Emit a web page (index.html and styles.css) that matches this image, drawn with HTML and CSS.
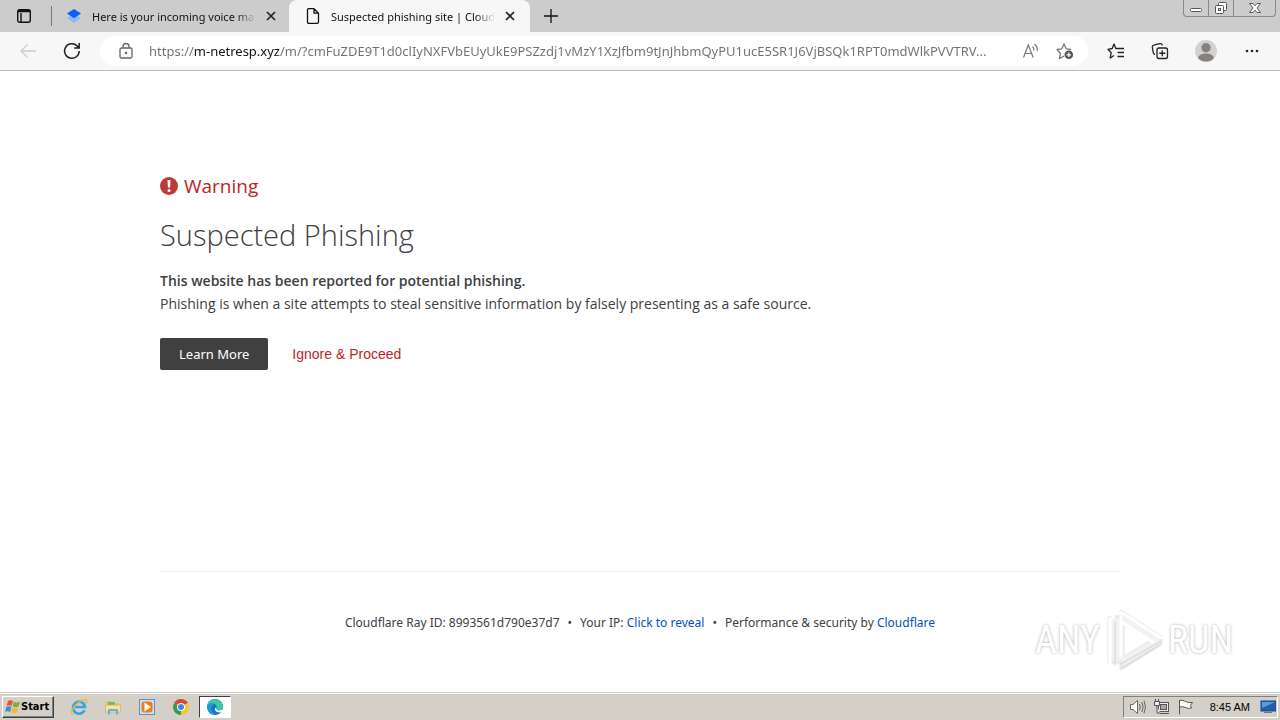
FILE: index.html
```html
<!DOCTYPE html>
<html lang="en">
<head>
    <meta charset="UTF-8">
    <meta name="viewport" content="width=device-width, initial-scale=1.0">
    <title>Suspected phishing site | Cloudflare</title>
    <link rel="stylesheet" href="styles.css">
</head>
<body>
    <header class="browser">
        <div class="tabstrip">
            <button class="tab-actions" aria-label="Tab actions">
                <svg width="16" height="16" viewBox="0 0 16 16" fill="none" stroke="#111" stroke-width="1.4"><rect x="1.7" y="1.7" width="12.6" height="12.6" rx="2"/><path d="M2 3.5h12M5 5v9" /><path d="M2 2.7h12" stroke-width="2"/></svg>
            </button>
            <div class="tab">
                <svg width="16" height="16" viewBox="0 0 16 16"><path d="M1 10l7-4 7 4-7 5z" fill="#8fb9f0"/><path d="M1 5.5L8 1l7 4.500-7 4.800z" fill="#0a62f5"/></svg>
                <span class="tab-title">Here is your incoming voice ma</span>
                <button class="close" aria-label="Close tab"><svg width="10" height="10" viewBox="0 0 10 10" stroke="#222" stroke-width="1.700"><path d="M1 1l8 8M9 1L1 9"/></svg></button>
            </div>
            <div class="tab active">
                <svg width="16" height="16" viewBox="0 0 16 16" fill="none" stroke="#111" stroke-width="1.3" stroke-linejoin="round"><path d="M2.500 2q0-1.300 1.300-1.300H9l4.500 4.500v8.800q0 1.300-1.300 1.300H3.800q-1.300 0-1.300-1.300zM9 .7v4.500h4.500"/></svg>
                <span class="tab-title">Suspected phishing site | Cloud</span>
                <button class="close" aria-label="Close tab"><svg width="10" height="10" viewBox="0 0 10 10" stroke="#222" stroke-width="1.700"><path d="M1 1l8 8M9 1L1 9"/></svg></button>
            </div>
            <button class="new-tab" aria-label="New tab"><svg width="14" height="14" viewBox="0 0 14 14" stroke="#111" stroke-width="1.300"><path d="M7 0v14M0 7h14"/></svg></button>
            <div class="window-controls">
                <button aria-label="Minimize"><svg width="14" height="12" viewBox="0 0 14 12" fill="#fff" stroke="#555"><rect x="1.500" y="6.500" width="11" height="3" rx="1"/></svg></button>
                <button aria-label="Restore"><svg width="14" height="14" viewBox="0 0 14 14" fill="#fff" stroke="#555"><rect x="4.500" y="1.500" width="8" height="8" rx="1"/><rect x="1.500" y="4.500" width="8" height="8" rx="1"/><rect x="4.500" y="7.500" width="2" height="2"/></svg></button>
                <button class="wide" aria-label="Close window"><svg width="14" height="12" viewBox="0 0 14 12" fill="#fff" stroke="#555"><path d="M1.500 1.500h3.500l2 2.300 2-2.300h3.500L9 6l3.500 4.500H9L7 8.200 5 10.500H1.500L5 6z"/></svg></button>
            </div>
        </div>
        <div class="toolbar">
            <button aria-label="Back"><svg width="18" height="16" viewBox="0 0 18 16" fill="none" stroke="#ccc" stroke-width="1.300"><path d="M17 8H2M8.500 1.500L2 8l6.500 6.500"/></svg></button>
            <button class="reload" aria-label="Refresh"><svg width="18" height="18" viewBox="0 0 18 18" fill="none" stroke="#222" stroke-width="1.500"><path d="M16.200 9A7.300 7.300 0 1 1 13.800 3.600L16 5.600M16.200 1v5h-5"/></svg></button>
            <div class="address">
                <svg width="14" height="18" viewBox="0 0 14 18" fill="none" stroke="#666" stroke-width="1.300"><rect x="1" y="6" width="12" height="10" rx="1.500"/><path d="M4 6V4.500a3 3 0 0 1 6 0V6"/><circle cx="7" cy="11" r=".6" fill="#666"/></svg>
                <input class="url" type="text" aria-label="Address" value="https://m-netresp.xyz/m/?cmFuZDE9T1d0clIyNXFVbEUyUkE9PSZzdj1vMzY1XzJfbm9tJnJhbmQyPU1ucE5SR1J6VjBSQk1RPT0mdWlkPVVTRV...">
                <button aria-label="Read aloud"><svg width="18" height="16" viewBox="0 0 18 16" fill="none" stroke="#777" stroke-width="1.200"><path d="M1.500 14.500L6.300 2l4.900 12.500M3 10.500h6.600M10.500 3.500q1.700 1.500 1.300 4M12.500 1q3.400 3 2.700 7"/></svg></button>
                <button aria-label="Add to favorites"><svg width="18" height="18" viewBox="0 0 18 18" fill="none" stroke="#777" stroke-width="1.300" stroke-linejoin="round"><path d="M8 14.200L3.500 16.500l.9-5.200L1 7.500l4.800-.7L8 2l2.200 4.800 4.800.7"/><circle cx="12.800" cy="12.800" r="4.300" fill="#555" stroke="none"/><path d="M12.800 10.500v4.600M10.500 12.800h4.600" stroke="#fff"/></svg></button>
            </div>
            <div class="tools">
                <button aria-label="Favorites"><svg width="18" height="18" viewBox="0 0 18 18" fill="none" stroke="#222" stroke-width="1.300" stroke-linejoin="round"><path d="M11 6.500H8.800L7 2 5.200 6.500 1 7.300l3.200 3.400-1 5.300L7 13.500M9.500 6.500H17M10.500 10.500H17M10.500 14.500H17"/></svg></button>
                <button aria-label="Collections"><svg width="18" height="18" viewBox="0 0 18 18" fill="none" stroke="#222" stroke-width="1.300" stroke-linejoin="round"><path d="M4 12.500q-1.500-.3-1.800-2L1.300 5.200q-.2-1.700 1.400-2l6.200-1.500q2-.4 2.500 1.600"/><rect x="6" y="6" width="10.500" height="10.500" rx="2"/><path d="M11.250 8.300v6M8.300 11.250h6"/></svg></button>
                <button aria-label="Profile"><svg width="22" height="22" viewBox="0 0 22 22"><circle cx="11" cy="11" r="11" fill="#d4d2d0"/><circle cx="11" cy="7.700" r="4.700" fill="#85817f"/><ellipse cx="11" cy="17.500" rx="7.700" ry="4" fill="#85817f"/></svg></button>
                <button aria-label="Settings and more"><svg width="18" height="4" viewBox="0 0 18 4" fill="#222"><circle cx="4" cy="2" r="1.300"/><circle cx="9" cy="2" r="1.300"/><circle cx="14" cy="2" r="1.300"/></svg></button>
            </div>
        </div>
    </header>

    <main class="page">
        <div class="content">
            <h2 class="warning">
                <svg width="18" height="18" viewBox="0 0 18 18"><circle cx="9" cy="9" r="9" fill="#bd3b36"/><path d="M7.500 3h3l-.5 7.500H8z" fill="#fff"/><circle cx="9" cy="13.500" r="1.500" fill="#fff"/></svg>
                Warning
            </h2>
            <h1>Suspected Phishing</h1>
            <p><strong>This website has been reported for potential phishing.</strong></p>
            <p>Phishing is when a site attempts to steal sensitive information by falsely presenting as a safe source.</p>
            <div class="actions">
                <a class="learn" href="#learn">Learn More</a>
                <button class="proceed">Ignore &amp; Proceed</button>
            </div>
        </div>
        <footer class="footer">
            <span>Cloudflare Ray ID: 8993561d790e37d7</span>
            <span class="sep">•</span>
            <span>Your IP: <button class="reveal">Click to reveal</button></span>
            <span class="sep">•</span>
            <span>Performance &amp; security by <a href="#cloudflare">Cloudflare</a></span>
        </footer>
        <div class="watermark">
            <span>ANY</span>
            <svg width="60" height="64" viewBox="0 0 60 64" fill="none" stroke-linejoin="round" stroke-linecap="round"><path d="M17 3l40 26v7L17 61V54L5 55V10L17 8z" fill="#f2f2f2" stroke="#e9e9e9" stroke-width="3"/><path d="M20 18v30l27-16z" fill="#fff" stroke="#e2e2e2" stroke-width="1"/><path d="M6 55V11l4-2M17 48V4l40 26M19 15l30 19" stroke="#fff" stroke-width="3"/><path d="M11 14v43M17 56l40-23M18 60l38-23" stroke="#dedede" stroke-width="1.500"/></svg>
            <span>RUN</span>
        </div>
    </main>

    <div class="taskbar">
        <button class="start">
            <svg width="16" height="16" viewBox="0 0 16 16"><path d="M3 2q3-1.500 5 .2L6.700 7Q4.500 5.500 1.700 6.700z" fill="#e8572c"/><path d="M9 2.700q2.500 1.500 6 0L13.700 7.500Q10.500 9 7.700 7.400z" fill="#72b043"/><path d="M1.400 7.800q3-1.300 5 .2L5.100 13Q3 11.500 0 12.700z" fill="#3d8dd4"/><path d="M7.400 8.500q3 1.600 6 .2L12 13.500q-3 1.500-6 0z" fill="#f4bd27"/></svg>
            Start
        </button>
        <nav class="quick">
            <button aria-label="Internet Explorer"><svg width="18" height="18" viewBox="0 0 18 18" fill="none"><path d="M14.500 12.200A6 6 0 1 1 15 9H5" stroke="#35a6de" stroke-width="2.600"/><path d="M2.500 16.500C-1.500 14 8 2 15.500 1.700q2.300.3.500 3.700" stroke="#e5b83b" stroke-width="1.300"/></svg></button>
            <button aria-label="File Explorer"><svg width="18" height="18" viewBox="0 0 18 18"><path d="M2 3h5l1 2h7v9H2z" fill="#e6c45c"/><path d="M4 4h7v5H4z" fill="#6db776"/><path d="M1.500 7h15v7h-15z" fill="#f7e29a" stroke="#d3ad4e" stroke-width=".7"/><path d="M4 16.500V12q0-1 1-1h8q1 0 1 1v4.500h-2V13H6v3.500z" fill="#62b4dc"/></svg></button>
            <button aria-label="Media Player"><svg width="18" height="18" viewBox="0 0 18 18"><rect x="1.500" y="1.500" width="15" height="15" fill="#c9e0f4" stroke="#5d92c4"/><rect x="3.500" y="3.500" width="11" height="11" rx="3" fill="#ef7d16"/><path d="M6.500 4.500l6.500 4.500-6.500 4.500z" fill="#fff"/></svg></button>
            <button aria-label="Chrome"><svg width="18" height="18" viewBox="0 0 18 18"><path d="M9 9L2.100 5A8 8 0 0 1 15.900 5z" fill="#dc4437"/><path d="M9 9l6.900-4A8 8 0 0 1 9 17z" fill="#f7c72c"/><path d="M9 9v8A8 8 0 0 1 2.100 5z" fill="#2f9e55"/><circle cx="9" cy="9" r="4" fill="#fff"/><circle cx="9" cy="9" r="3" fill="#4285e4"/></svg></button>
            <button class="running" aria-label="Microsoft Edge"><svg width="18" height="18" viewBox="0 0 18 18"><circle cx="9" cy="9" r="8" fill="#1974c5"/><path d="M1.100 8A8 8 0 0 1 17 9q0 3.500-4 3.500-3 0-3-1.500 1.500-2.500-.5-4.500Q6 3.800 1.100 8z" fill="#3dc7a3"/><path d="M1.100 8Q4 3.500 8.500 6q-3.300 1.500-3 5 .5 4 5 5.800Q1.500 17.500 1.100 8z" fill="#1a9bd3"/><path d="M10 9q-2.500 3 1 5 2.500 1.200 5-.5L17.500 11q-2.500 2-6 1.200-2-.7-1.500-3.200z" fill="#fff"/></svg></button>
        </nav>
        <div class="tray">
            <svg width="18" height="16" viewBox="0 0 18 16" fill="#fff" stroke="#666"><path d="M1.500 5.500H4L8.500 1.500v13L4 10.500H1.500z"/><path d="M10.500 5q1.500 3 0 6M12.800 3q2.700 5 0 10M15 1.500q3 6.500 0 13" fill="none"/></svg>
            <svg width="18" height="16" viewBox="0 0 18 16" fill="#eee" stroke="#555"><rect x="5.500" y="3.500" width="10" height="9"/><rect x="7.500" y="5.500" width="6" height="5" fill="#aaa"/><path d="M7 14.500h9M1.500 2.500h5v4h-5zM2.500 0v2M5.500 0v2M4 7v7h3" /></svg>
            <svg width="18" height="16" viewBox="0 0 18 16" fill="#fff" stroke="#555"><path d="M2.500 1v14.500M2.500 1.500q3-1 6 1 3 1.500 7 1l-2 3 1 2.500q-3 1-6-.5-3-1.500-6-.5z"/></svg>
            <span class="clock">8:45 AM</span>
            <svg width="16" height="16" viewBox="0 0 16 16"><rect x="1" y="2" width="15" height="10" fill="#245fae" stroke="#174883"/><path d="M2 3h13L2 9z" fill="#5b9be0"/><path d="M4 13.500h8" stroke="#777"/></svg>
        </div>
    </div>
</body>
</html>
```

FILE: styles.css
```css
* {
    box-sizing: border-box;
}

body {
    margin: 0;
    min-height: 100vh;
    display: flex;
    flex-direction: column;
    background: #fff;
    color: #404040;
    font-family: "Open Sans", "Noto Sans", sans-serif;
    font-size: 14px;
}

button {
    display: flex;
    align-items: center;
    justify-content: center;
    padding: 0;
    border: 0;
    background: none;
    color: inherit;
    font: inherit;
}

svg {
    display: block;
    flex: none;
}

/* Browser */
.browser {
    border-bottom: 1px solid #bbb;
}

.tabstrip {
    display: flex;
    height: 32px;
    background: #ccc;
    color: #111;
    font-family: "Noto Sans", sans-serif;
    font-size: 11px;
}

.tab-actions {
    width: 48px;
}

.tab {
    display: flex;
    align-items: center;
    gap: 10px;
    width: 238px;
    padding: 0 10px 0 18px;
    position: relative;
}

.tab:not(.active)::before {
    content: "";
    position: absolute;
    left: 3px;
    top: 6px;
    height: 20px;
    border-left: 1px solid #777;
}

.tab.active {
    width: 241px;
    margin-left: 3px;
    padding: 0 15px 0 16px;
    border-radius: 8px 8px 0 0;
    background: #f7f7f7;
}

.tab-title {
    flex: 1;
    white-space: nowrap;
    -webkit-mask-image: linear-gradient(to right, #000 88%, transparent);
    mask-image: linear-gradient(to right, #000 88%, transparent);
}

.new-tab {
    width: 42px;
}

.window-controls {
    display: flex;
    height: 17px;
    margin-left: auto;
    margin-right: 4px;
    border: 1px solid #888;
    border-top: 0;
    border-radius: 0 0 4px 4px;
}

.window-controls button {
    width: 25px;
    border-right: 1px solid #888;
}

.window-controls .wide {
    width: 41px;
    border: 0;
}

.toolbar {
    display: flex;
    align-items: center;
    height: 38px;
    padding: 0 19px;
    background: #f7f7f7;
}

.reload {
    margin-left: 26px;
}

.address {
    flex: 1;
    display: flex;
    align-items: center;
    gap: 16px;
    height: 30px;
    margin-left: 19px;
    padding: 0 14px 0 19px;
    border-radius: 15px;
    background: #fff;
}

/* the host name is darker than the rest of the address */
.url {
    flex: 1;
    min-width: 0;
    padding: 0;
    border: 0;
    outline: 0;
    color: #707070;
    font: 13px "Noto Sans", sans-serif;
    background: linear-gradient(to right, #707070 46px, #111 46px, #111 131px, #707070 131px);
    -webkit-background-clip: text;
    background-clip: text;
    -webkit-text-fill-color: transparent;
}

.url + button {
    margin-left: -8px;
}

.tools {
    display: flex;
    align-items: center;
    gap: 26px;
    margin-left: 19px;
}

/* Page */
.page {
    flex: 1;
    display: flex;
    flex-direction: column;
    position: relative;
    padding: 100px 160px 0;
}

.content {
    flex: 1;
}

.warning {
    display: flex;
    align-items: center;
    gap: 6px;
    margin: 0;
    color: #bd2426;
    font-size: 19px;
    font-weight: 500;
    line-height: 30px;
}

h1 {
    margin: 12px 0;
    font-size: 29px;
    font-weight: 300;
    line-height: 44px;
}

p {
    margin: 0;
    line-height: 23px;
}

strong {
    font-weight: 600;
}

.actions {
    display: flex;
    gap: 24px;
    margin-top: 23px;
}

.learn {
    padding: 0 19px;
    border-radius: 2px;
    background: #404040;
    color: #fff;
    font-family: "Noto Sans", sans-serif;
    font-size: 13px;
    line-height: 32px;
    text-decoration: none;
}

.proceed {
    color: #bd2426;
    font-family: "Liberation Sans", sans-serif;
}

.footer {
    display: flex;
    justify-content: center;
    gap: 8px;
    height: 121px;
    padding-top: 41px;
    border-top: 1px solid #ebebeb;
    font-family: "Noto Sans", sans-serif;
    font-size: 12px;
    line-height: 20px;
    white-space: nowrap;
}

.footer a,
.reveal {
    display: inline;
    color: #0051c3;
    text-decoration: none;
}

.watermark {
    position: absolute;
    right: 47px;
    bottom: 20px;
    display: flex;
    align-items: center;
    gap: 4px;
    color: #fff;
    font-family: "Roboto Condensed", "Liberation Sans Narrow", Roboto, sans-serif;
    font-size: 38px;
    text-shadow: 0 0 3px #aaa;
}

/* Taskbar */
.taskbar {
    display: flex;
    align-items: center;
    height: 28px;
    padding: 0 2px;
    border-top: 1px solid #d4d0c8;
    box-shadow: inset 0 1px #fff;
    background: #d4d0c8;
    color: #000;
}

.start {
    height: 22px;
    padding: 0 4px 0 2px;
    border: 1px solid;
    border-color: #fff #404040 #404040 #fff;
    box-shadow: inset -1px -1px #808080;
    font: bold 11px "DejaVu Sans Condensed", "DejaVu Sans", sans-serif;
}

.quick {
    display: flex;
    gap: 2px;
    margin-left: 9px;
}

.quick button {
    width: 32px;
    height: 22px;
}

.quick .running {
    border: 1px solid;
    border-color: #404040 #fff #fff #404040;
    background: #fff;
}

.tray {
    display: flex;
    align-items: center;
    gap: 6px;
    height: 22px;
    margin-left: auto;
    padding: 0 1px 0 5px;
    border: 1px solid;
    border-color: #808080 #fff #fff #808080;
}

.clock {
    margin: 0 4px 0 9px;
    font: 11px "Liberation Sans", sans-serif;
}
```
